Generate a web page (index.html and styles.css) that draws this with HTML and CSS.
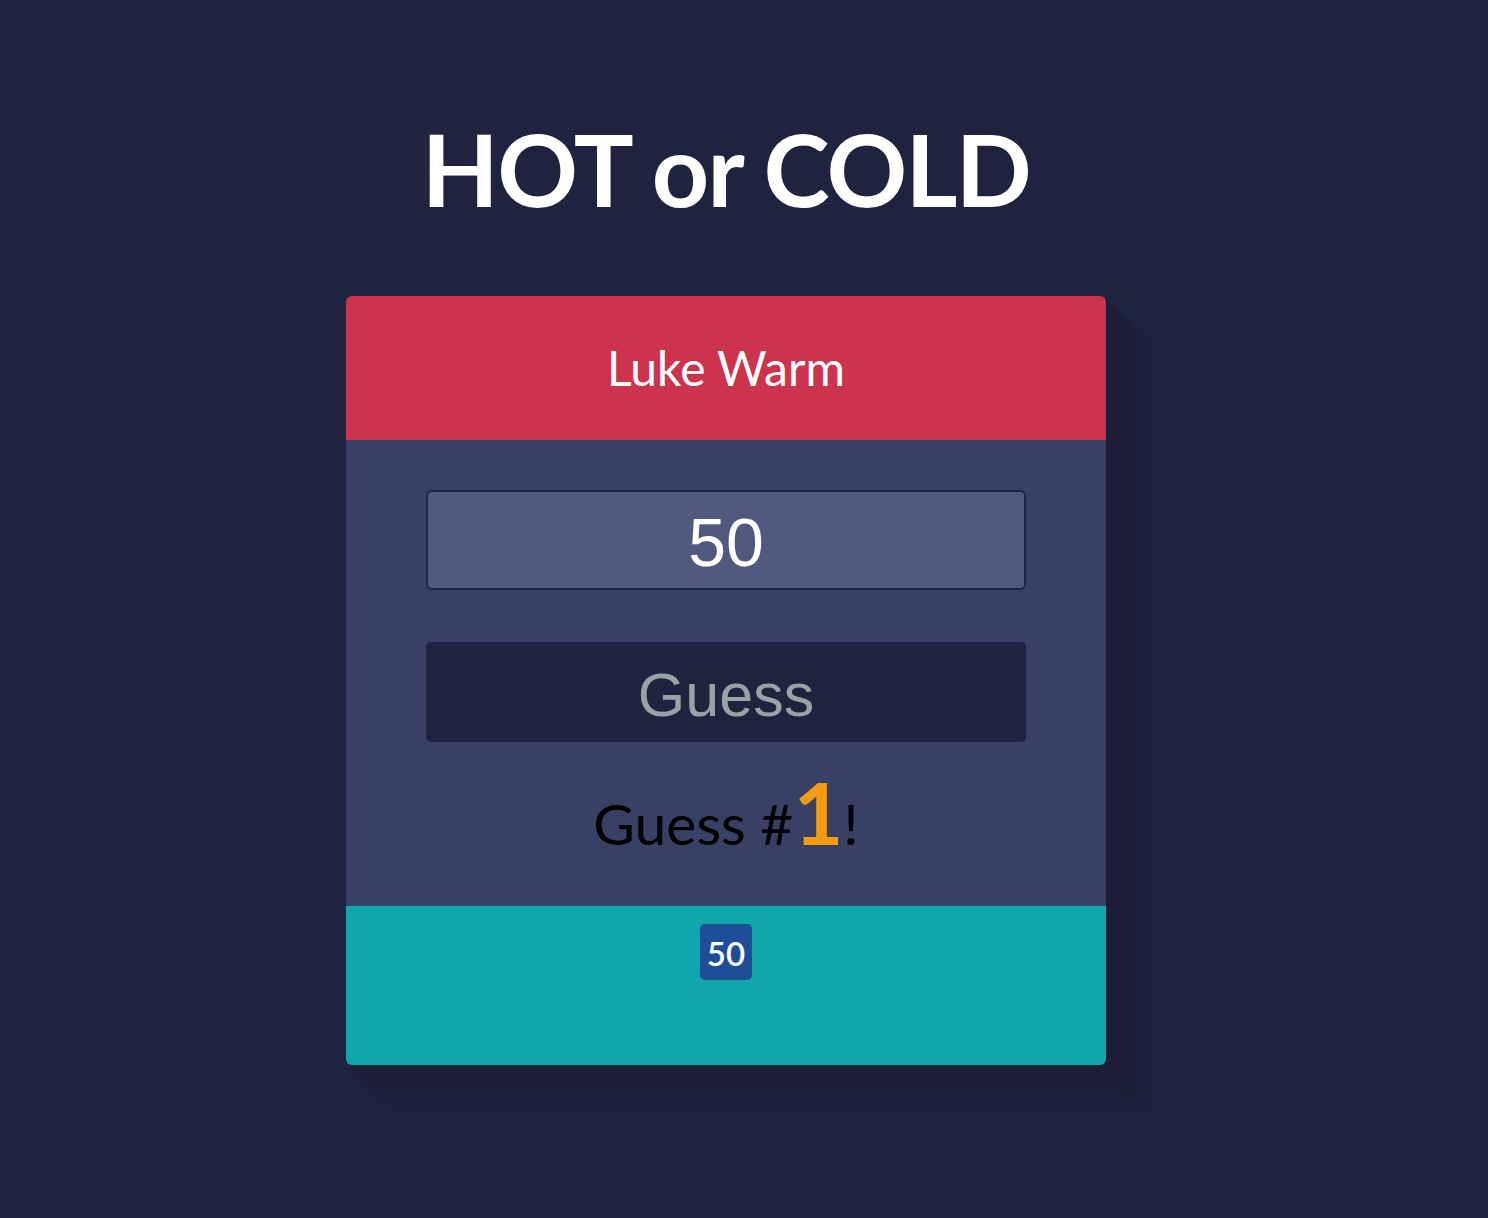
FILE: index.html
```html
<!DOCTYPE html>
<html>
<head>
<meta charset="utf-8">
<link rel="stylesheet" href="styles.css">
</head>
<body>
<header class="top">
  <h1 class="title">HOT or COLD</h1>
</header>
<main class="game">
  <div class="feedback">Luke Warm</div>
  <div class="play">
    <input class="guess-input" type="text" value="50">
    <button class="guess-btn">Guess</button>
    <p class="count">Guess #<span class="count-num">1</span>!</p>
  </div>
  <div class="history">
    <span class="chip">50</span>
  </div>
</main>
</body>
</html>
```
FILE: styles.css
```css
html, body {
  margin: 0;
  padding: 0;
}
body {
  background: #1f2340;
  font-family: "Lato", "Liberation Sans", sans-serif;
  min-height: 1218px;
  overflow: hidden;
  padding-right: 36px;
}
.top {
  display: flex;
  justify-content: center;
  padding-top: 113px;
}
.title {
  margin: 0;
  color: #ffffff;
  font-weight: 700;
  font-size: 100px;
  line-height: 110px;
  letter-spacing: -1.7px;
}
.game {
  width: 760px;
  margin: 73px auto 0;
  border-radius: 6px;
  overflow: hidden;
  display: flex;
  flex-direction: column;
  box-shadow:
    2px 2px 0 #1c1f37, 4px 4px 0 #1c1f37, 6px 6px 0 #1c1f37, 8px 8px 0 #1c1f37,
    10px 10px 0 #1c1f37, 12px 12px 0 #1c1f37, 14px 14px 0 #1c1f37, 16px 16px 0 #1c1f37,
    18px 18px 0 #1c1f37, 20px 20px 0 #1c1f37, 22px 22px 0 #1d2039, 24px 24px 0 #1d2039,
    26px 26px 0 #1d2039, 28px 28px 0 #1d2039, 30px 30px 0 #1d213a, 32px 32px 0 #1d213a,
    34px 34px 0 #1e213b, 36px 36px 0 #1e213b, 38px 38px 0 #1e223c, 40px 40px 0 #1e223d,
    42px 42px 0 #1f223e, 44px 44px 0 #1f223f;
}
.feedback {
  background: #cc334d;
  color: #ffffff;
  height: 144px;
  display: flex;
  align-items: center;
  justify-content: center;
  font-size: 48px;
  padding-bottom: 2px;
  box-sizing: border-box;
}
.play {
  background: #394065;
  display: flex;
  flex-direction: column;
  align-items: center;
  padding: 50px 80px 0;
  height: 466px;
  box-sizing: border-box;
}
.guess-input {
  width: 600px;
  height: 100px;
  box-sizing: border-box;
  background: #4f5a7e;
  border: 2px solid #1f2340;
  border-radius: 6px;
  color: #ffffff;
  text-align: center;
  font-family: "Liberation Sans", Arial, sans-serif;
  font-size: 68px;
  padding: 4px 0 0;
  outline: none;
}
.guess-btn {
  margin-top: 52px;
  width: 600px;
  height: 100px;
  background: #1f2340;
  border: none;
  border-radius: 5px;
  color: #95a5a6;
  font-family: "Liberation Sans", Arial, sans-serif;
  font-size: 61px;
  padding: 6px 0 0;
}
.count {
  margin: 28px 0 0;
  color: #000000;
  font-size: 57px;
  line-height: 84px;
}
.count-num {
  color: #f39c12;
  font-weight: 700;
  font-size: 86px;
}
.history {
  background: #11a8ab;
  height: 159px;
  display: flex;
  justify-content: center;
  align-items: flex-start;
  padding-top: 18px;
  box-sizing: border-box;
}
.chip {
  background: #1f4e99;
  color: #ffffff;
  font-size: 33px;
  font-weight: 600;
  border-radius: 5px;
  width: 52px;
  height: 56px;
  display: flex;
  align-items: center;
  justify-content: center;
  padding-top: 2px;
  box-sizing: border-box;
}
```
